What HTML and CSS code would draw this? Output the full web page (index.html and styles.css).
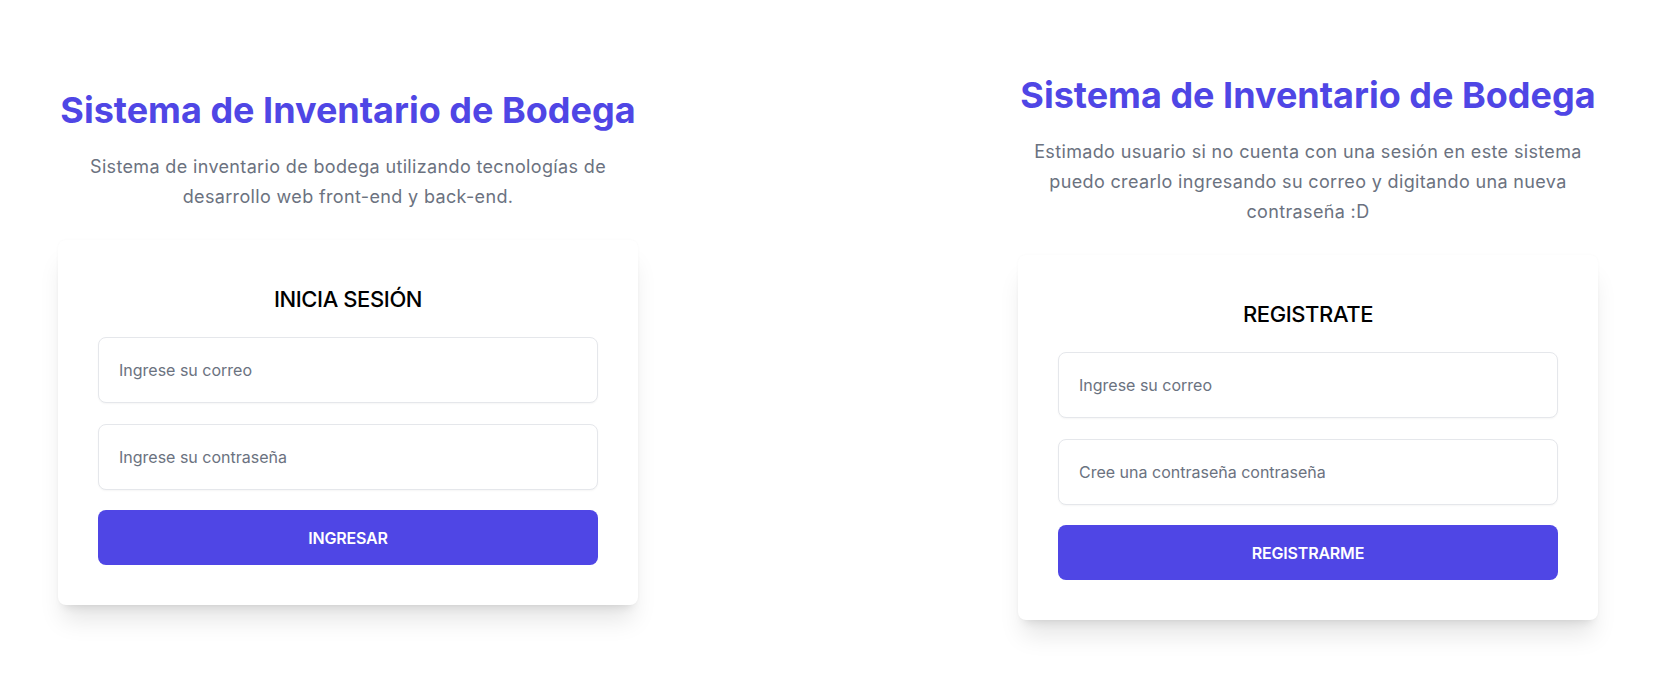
FILE: index.html
```html
<!DOCTYPE html>
<html lang="es">
<head>
<meta charset="utf-8">
<title>Sistema de Inventario de Bodega</title>
<link rel="stylesheet" href="styles.css">
</head>
<body>
<main class="page">
  <section class="column">
    <h1 class="title">Sistema de Inventario de Bodega</h1>
    <p class="lead">Sistema de inventario de bodega utilizando tecnologías de desarrollo web front-end y back-end.</p>
    <form class="card">
      <h2 class="card-title">INICIA SESIÓN</h2>
      <input class="field" type="email" placeholder="Ingrese su correo">
      <input class="field" type="password" placeholder="Ingrese su contraseña">
      <button class="btn" type="button">INGRESAR</button>
    </form>
  </section>
  <section class="column">
    <h1 class="title">Sistema de Inventario de Bodega</h1>
    <p class="lead">Estimado usuario si no cuenta con una sesión en este sistema puedo crearlo ingresando su correo y digitando una nueva contraseña :D</p>
    <form class="card">
      <h2 class="card-title">REGISTRATE</h2>
      <input class="field" type="email" placeholder="Ingrese su correo">
      <input class="field" type="password" placeholder="Cree una contraseña contraseña">
      <button class="btn" type="button">REGISTRARME</button>
    </form>
  </section>
</main>
</body>
</html>
```
FILE: styles.css
```css
* { box-sizing: border-box; }

html, body {
  margin: 0;
  padding: 0;
  background: #ffffff;
}

body {
  font-family: "Inter", "Open Sans", sans-serif;
  color: #111827;
}

.page {
  min-height: 676px;
  display: flex;
  align-items: center;
  gap: 380px;
  padding: 19px 0 0 58px;
}

.column {
  width: 580px;
  display: flex;
  flex-direction: column;
}

.title {
  margin: 0 0 22px;
  font-size: 36px;
  line-height: 40px;
  font-weight: 700;
  color: #4f46e5;
  text-align: center;
  white-space: nowrap;
}

.lead {
  margin: 0 0 28px;
  padding: 0 10px;
  font-size: 18px;
  line-height: 30px;
  letter-spacing: 0.35px;
  color: #6b7280;
  text-align: center;
}

.card {
  background: #ffffff;
  border-radius: 8px;
  padding: 40px;
  box-shadow: 0 20px 25px -5px rgba(0, 0, 0, 0.1), 0 8px 10px -6px rgba(0, 0, 0, 0.1), 0 0 3px rgba(0, 0, 0, 0.03);
  display: flex;
  flex-direction: column;
}

.card-title {
  margin: 0 0 19px;
  font-size: 22px;
  line-height: 38px;
  font-weight: 500;
  letter-spacing: -0.4px;
  color: #000000;
  text-align: center;
}

.field {
  display: block;
  width: 100%;
  height: 66px;
  margin: 0 0 20.5px;
  padding: 0 20px;
  border: 1px solid #e5e7eb;
  border-radius: 8px;
  background: #ffffff;
  box-shadow: 0 1px 2px rgba(0, 0, 0, 0.04);
  font-family: inherit;
  font-size: 16px;
  color: #111827;
  outline: none;
}

.field::placeholder {
  color: #6b7280;
  opacity: 1;
}

.btn {
  display: block;
  width: 100%;
  height: 55px;
  border: 0;
  border-radius: 8px;
  background: #4f46e5;
  color: #ffffff;
  font-family: inherit;
  font-size: 16px;
  font-weight: 600;
  letter-spacing: -0.2px;
  cursor: pointer;
}
```
